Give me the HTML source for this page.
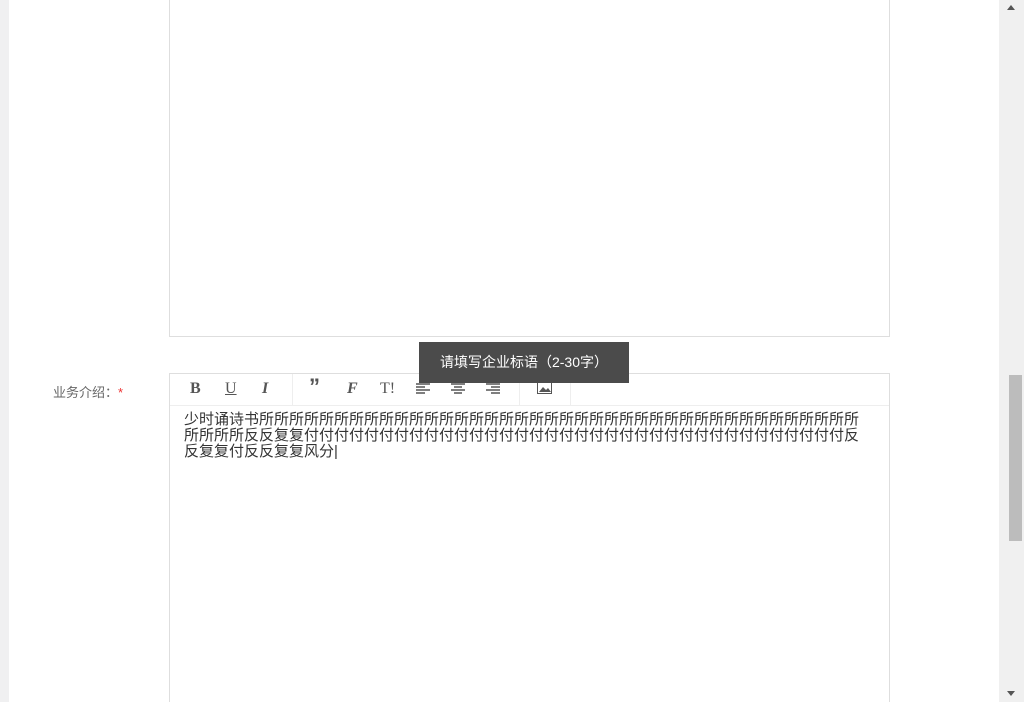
<!DOCTYPE html>
<html><head><meta charset="utf-8"><style>
html,body{margin:0;width:1024px;height:702px;overflow:hidden}
body{background:#fff;position:relative;font-family:"Liberation Sans","Noto Sans CJK SC",sans-serif}
.l{position:absolute;left:0;top:0;width:9px;height:702px;background:#f0f0f1}
.sb{position:absolute;left:999px;top:0;width:25px;height:702px;background:#f0f0f0}
.th{position:absolute;left:10px;top:375px;width:13px;height:166px;background:#bcbcbc}
.box{position:absolute;left:169px;width:719px;border:1px solid #dedede;background:#fff}
.tb{position:absolute;top:0;left:0;right:0;height:31px;border-bottom:1px solid #eee}
.ic{position:absolute;top:6px;font-size:16px;color:#555;font-family:"Liberation Serif",serif;font-weight:bold}
.sep{position:absolute;top:0;width:1px;height:31px;background:#eee}
.txt{position:absolute;left:14px;top:38px;font-size:15px;line-height:16px;color:#333;white-space:nowrap}
.tip{position:absolute;left:419px;top:342px;width:210px;height:41px;background:#4b4b4b;color:#fff;font-size:14px;line-height:41px;text-align:center}
.lab{position:absolute;left:53px;top:382px;font-size:13px;color:#666}
</style></head><body>
<div class="l"></div>
<div class="box" style="top:-2px;height:337px"></div>
<div class="lab">业务介绍：<span style="color:#e33">*</span></div>
<div class="box" style="top:373px;height:340px">
<div class="tb">
<span class="ic" style="left:20px">B</span>
<span class="ic" style="left:55px;text-decoration:underline;font-weight:normal">U</span>
<span class="ic" style="left:92px;font-style:italic">I</span>
<div class="sep" style="left:122px"></div>
<span class="ic" style="left:139px;font-size:22px;top:0px;font-family:'Liberation Sans',sans-serif">&#8221;</span>
<span class="ic" style="left:177px;font-style:italic">F</span>
<span class="ic" style="left:210px;font-weight:normal">T!</span>
<svg style="position:absolute;left:246px;top:9px" width="14" height="12"><path d="M0 1h14M0 4h9M0 7h14M0 10h9" stroke="#555" stroke-width="1.5"/></svg>
<svg style="position:absolute;left:281px;top:9px" width="14" height="12"><path d="M0 1h14M3 4h8M0 7h14M3 10h8" stroke="#555" stroke-width="1.5"/></svg>
<svg style="position:absolute;left:316px;top:9px" width="14" height="12"><path d="M0 1h14M5 4h9M0 7h14M5 10h9" stroke="#555" stroke-width="1.5"/></svg>
<div class="sep" style="left:349px"></div>
<svg style="position:absolute;left:367px;top:8px" width="15" height="12"><rect x="0.5" y="0.5" width="14" height="11" fill="none" stroke="#555"/><path d="M2 10l4-5 3 3 2-2 3 4z" fill="#555"/></svg>
<div class="sep" style="left:400px"></div>
</div>
<div class="txt">少时诵诗书所所所所所所所所所所所所所所所所所所所所所所所所所所所所所所所所所所所所所所所所<br>所所所所反反复复付付付付付付付付付付付付付付付付付付付付付付付付付付付付付付付付付付付付反<br>反复复付反反复复风分|</div>
</div>
<div class="tip">请填写企业标语（2-30字）</div>
<div class="sb"><div class="th"></div>
<svg style="position:absolute;left:8px;top:5px" width="8" height="5"><path d="M0 5L4 0L8 5z" fill="#555"/></svg>
<svg style="position:absolute;left:8px;top:691px" width="8" height="5"><path d="M0 0L4 5L8 0z" fill="#555"/></svg>
</div>
</body></html>
